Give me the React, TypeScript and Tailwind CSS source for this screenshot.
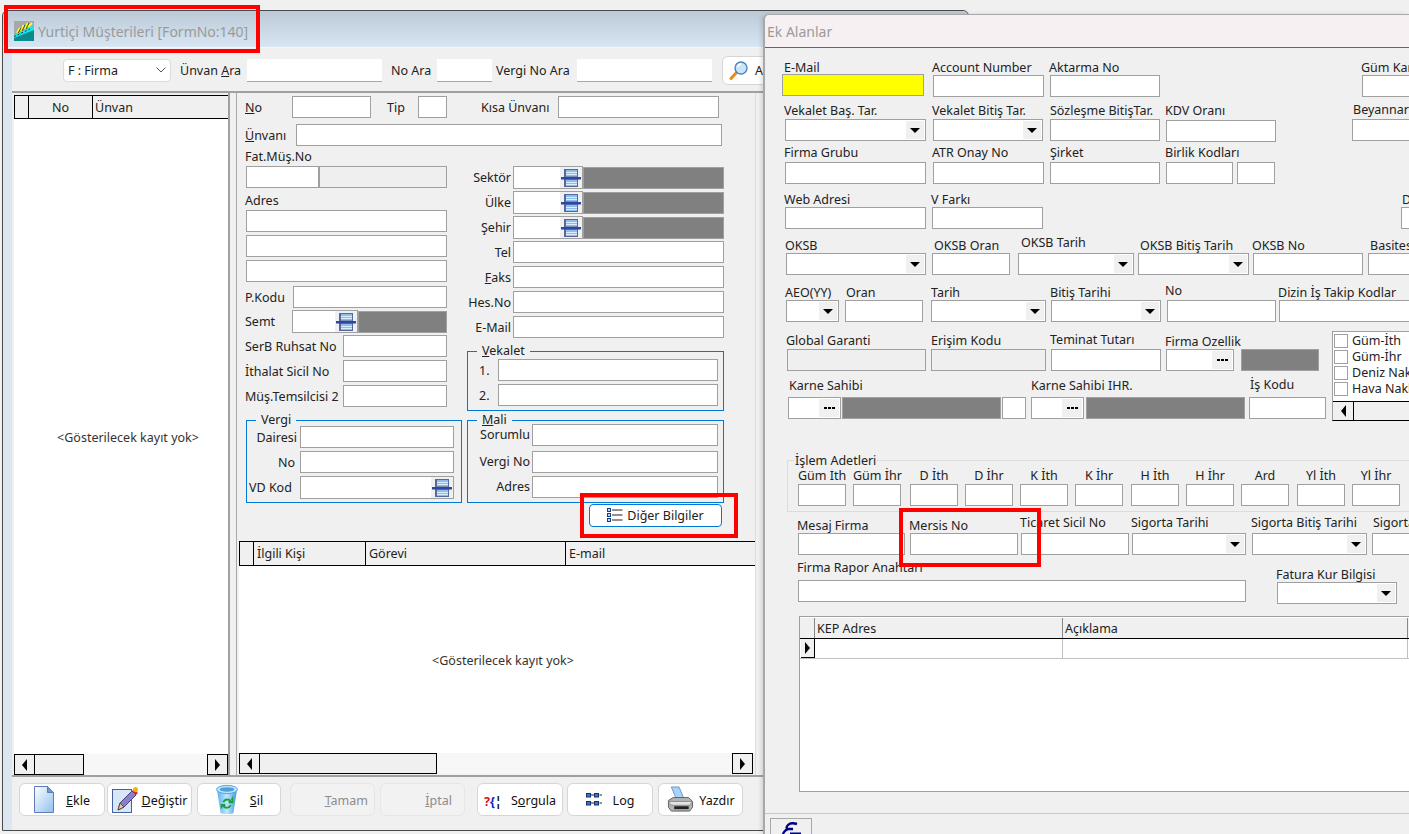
import React from 'react'

const Box = ({ className = '' }: { className?: string }) => (
  <div className={`h-[22px] shrink-0 border border-[#a0a0a0] bg-white ${className}`} />
)
const Gray = ({ className = '' }: { className?: string }) => (
  <div className={`h-[22px] shrink-0 border border-[#a0a0a0] bg-[#efefef] ${className}`} />
)
const Dark = ({ className = '' }: { className?: string }) => (
  <div className={`h-[22px] shrink-0 border border-[#a0a0a0] bg-[#808080] ${className}`} />
)

const Select = ({ className = '' }: { className?: string }) => (
  <div className={`flex h-[22px] shrink-0 justify-end border border-[#a0a0a0] bg-white p-px ${className}`}>
    <div className="flex w-[18px] items-center justify-center bg-[#f0f0f0]">
      <div className="h-0 w-0 border-x-[5px] border-t-[5px] border-x-transparent border-t-black" />
    </div>
  </div>
)

const Ellipsis = ({ className = '' }: { className?: string }) => (
  <div className={`flex h-[22px] shrink-0 justify-end border border-[#a0a0a0] bg-white p-px ${className}`}>
    <div className="flex w-[20px] items-center justify-center gap-px bg-[#f0f0f0]">
      <div className="h-[2px] w-[3px] bg-black" />
      <div className="h-[2px] w-[3px] bg-black" />
      <div className="h-[2px] w-[3px] bg-black" />
    </div>
  </div>
)

function LookupIcon() {
  return (
    <svg width="20" height="20" viewBox="0 0 20 20">
      <rect x="3" y="1" width="14" height="18" fill="#56689f" />
      <rect x="5" y="2" width="11" height="16" fill="#8fbcec" />
      <path d="M5 4.500h11M5 6.500h11M5 14.500h11M5 16.500h11" stroke="#dcedfc" />
      <rect x="5" y="8" width="11" height="4" fill="#7a8cb8" />
      <rect x="0" y="9" width="20" height="2.500" fill="#2a48a0" />
    </svg>
  )
}

const Lookup = ({ className = '' }: { className?: string }) => (
  <div className={`flex h-[23px] shrink-0 justify-end border border-[#a0a0a0] bg-white ${className}`}>
    <div className="flex w-[22px] items-center justify-center bg-[#f0f0f0]">
      <LookupIcon />
    </div>
  </div>
)

function Cell({ label, className = '', labelClass = '', children }: { label: string; className?: string; labelClass?: string; children: React.ReactNode }) {
  return (
    <div className={`flex shrink-0 flex-col ${className}`}>
      <div className={`h-4 whitespace-nowrap leading-[18px] ${labelClass}`}>{label}</div>
      {children}
    </div>
  )
}

function Legend({ className = '', children }: { className?: string; children: React.ReactNode }) {
  return <div className={`absolute h-4 bg-[#f0f0f0] px-[5px] leading-4 ${className}`}>{children}</div>
}

function ScrollBtn({ dir }: { dir: 'l' | 'r' }) {
  return (
    <div className="flex h-full w-[21px] shrink-0 items-center justify-center border border-black bg-[#f0f0f0]">
      {dir === 'l' ? (
        <div className="h-0 w-0 border-y-[6px] border-r-[5px] border-y-transparent border-r-black" />
      ) : (
        <div className="h-0 w-0 border-y-[6px] border-l-[5px] border-y-transparent border-l-black" />
      )}
    </div>
  )
}

function AppIcon() {
  return (
    <svg width="20" height="20" viewBox="0 0 20 20" className="shrink-0">
      <rect width="20" height="20" fill="#a8a8a8" />
      <path d="M0 14 20 4v6L0 20z" fill="#14e6f0" />
      <path d="M0 17 20 9v11H0z" fill="#0a8a8c" />
      <path d="M0 15.500 16 8" stroke="#0a3a3c" strokeDasharray="2 2" />
      <path d="M3 12 6 7M7 10l3-6M11 8l3-6M14 6l4-4" stroke="#ffff20" strokeWidth="2.200" />
      <path d="M4 12 7 7M8 10l3-6M12 8l3-6" stroke="#111" strokeWidth=".8" />
    </svg>
  )
}

function Magnifier() {
  return (
    <svg width="20" height="20" viewBox="0 0 20 20">
      <path d="M2 18.500 8 12" stroke="#e88a1c" strokeWidth="3" strokeLinecap="round" />
      <circle cx="12" cy="8" r="6" fill="#c8e6fa" stroke="#4f86b8" strokeWidth="1.400" />
      <path d="M9 7a3.500 3.500 0 0 1 3-3" stroke="#fff" strokeWidth="1.400" fill="none" />
    </svg>
  )
}

function ListIcon() {
  return (
    <svg width="16" height="15" viewBox="0 0 16 15">
      <g fill="#bcd6f0" stroke="#12408f">
        <rect x=".5" y=".5" width="3" height="3" />
        <rect x=".5" y="5.500" width="3" height="3" />
        <rect x=".5" y="10.500" width="3" height="3" />
      </g>
      <path d="M5 2h10.500M5 7h10.500M5 12h10.500" stroke="#222" />
    </svg>
  )
}

function DocIcon() {
  return (
    <svg width="20" height="27" viewBox="0 0 20 27">
      <defs>
        <linearGradient id="doc" x1="0" y1="0" x2="1" y2="1">
          <stop offset="0" stopColor="#ffffff" />
          <stop offset="1" stopColor="#8fc0ee" />
        </linearGradient>
      </defs>
      <path d="M.5.5h13l6 6v20H.5z" fill="url(#doc)" stroke="#5f7cb5" />
      <path d="M13.500.5v6h6z" fill="#6e9ad8" stroke="#5f7cb5" />
    </svg>
  )
}

function EditIcon() {
  return (
    <svg width="27" height="27" viewBox="0 0 27 27">
      <rect x=".5" y="3.500" width="19" height="23" fill="#d7e7f8" stroke="#45609f" />
      <path d="M6 24 8 17 20 5l4 4-12 12z" fill="#8a80c8" stroke="#4b3f86" />
      <path d="M6 24l2-7 4 4z" fill="#e8c89a" stroke="#5a4a30" />
      <path d="m20 5 2-2 4 4-2 2z" fill="#e02c1c" />
      <circle cx="23.500" cy="3.500" r="2.500" fill="#e6b818" />
    </svg>
  )
}

function BinIcon() {
  return (
    <svg width="24" height="31" viewBox="0 0 24 34">
      <defs>
        <linearGradient id="bin" x1="0" y1="0" x2="1" y2="0">
          <stop offset="0" stopColor="#58b0ee" />
          <stop offset=".5" stopColor="#bfe8ff" />
          <stop offset="1" stopColor="#3f96da" />
        </linearGradient>
      </defs>
      <path d="M1 6 5 32q7 2 14 0L23 6z" fill="url(#bin)" />
      <ellipse cx="12" cy="6" rx="11.500" ry="4.500" fill="#bce6fb" stroke="#4b9ede" />
      <ellipse cx="12" cy="6" rx="8" ry="2.500" fill="#4f9fdc" />
      <path d="M8 20a4.500 4.500 0 0 1 8-1l-2 1h4v-4l-1 1.500M16 23a4.500 4.500 0 0 1-8 1l2-1H6v4" fill="none" stroke="#1da03a" strokeWidth="2" />
    </svg>
  )
}

function LogIcon() {
  return (
    <svg width="18" height="15" viewBox="0 0 18 15">
      <g fill="#3f78c0" stroke="#14306e">
        <rect x=".5" y="1.500" width="4" height="3.500" />
        <rect x="8.500" y="1.500" width="4" height="3.500" />
        <rect x=".5" y="9.500" width="4" height="3.500" />
        <rect x="8.500" y="9.500" width="4" height="3.500" />
      </g>
      <path d="M5 3h3M13.500 3H16M5 11h3M13.500 11H16" stroke="#222" />
    </svg>
  )
}

function PrinterIcon() {
  return (
    <svg width="28" height="27" viewBox="0 0 28 28">
      <path d="M5 1h8l5 12H10z" fill="#a9d2f8" stroke="#6f94c4" />
      <path d="M2 15 7 12h16l4 4v6l-3 4H5l-3-4z" fill="#b4b4b4" stroke="#5e5e5e" />
      <path d="M2 16h25l-3 4H5z" fill="#e4e4e4" stroke="#8a8a8a" />
      <path d="M8 21h15v3H8z" fill="#222" />
    </svg>
  )
}

function ToolBtn({ className = '', disabled = false, children }: { className?: string; disabled?: boolean; children: React.ReactNode }) {
  return (
    <div className={`flex h-[33px] shrink-0 items-center rounded-md border ${disabled ? 'border-[#e6e6e6] bg-[#f2f2f2] text-[#8d8d8d]' : 'border-[#d6d6d6] bg-white text-[#111]'} ${className}`}>
      {children}
    </div>
  )
}

function MainWindow() {
  const row = 'flex items-center'
  return (
    <div className="absolute left-[2px] top-[10px] flex h-[821px] w-[967px] flex-col rounded-t-md border border-[#4a4a4a] bg-[#dbe6f1]">
      <div className="flex h-[37px] shrink-0 items-center gap-[4px] rounded-t-md border-b border-[#f5f8fb] bg-gradient-to-b from-[#bccad8] to-[#d8e5f2] pl-[11px] pt-[4px] text-[14px] text-[#9a9a9a]">
        <AppIcon />
        <span>Yurtiçi Müşterileri [FormNo:140]</span>
      </div>
      <div className="ml-[9px] flex flex-1 flex-col bg-[#f0f0f0] text-[#222]">
        <div className="flex h-[45px] shrink-0 items-center border-b-2 border-[#a0a0a0] pt-px [&_span]:pt-[2px]">
          <div className="ml-[51px] flex h-[23px] w-[108px] items-center justify-between rounded-sm border border-[#dcdcdc] bg-white px-[4px]">
            <span>F : Firma</span>
            <svg width="10" height="6" viewBox="0 0 10 6"><path d="m.5.5 4.500 4.500L9.500.5" fill="none" stroke="#555" /></svg>
          </div>
          <span className="ml-[9px] w-[67px] whitespace-nowrap">Ünvan <u>A</u>ra</span>
          <div className="h-[23px] w-[135px] border-b border-[#a8a8a8] bg-white" />
          <span className="ml-[9px] w-[46px] whitespace-nowrap">No Ara</span>
          <div className="h-[23px] w-[55px] border-b border-[#a8a8a8] bg-white" />
          <span className="ml-[4px] w-[81px] whitespace-nowrap">Vergi No Ara</span>
          <div className="h-[23px] w-[135px] border-b border-[#a8a8a8] bg-white" />
          <div className="ml-[10px] flex h-[29px] w-[80px] items-center gap-[6px] rounded-md border border-[#d6d6d6] bg-white pl-[6px]">
            <Magnifier />
            <span>Ara</span>
          </div>
        </div>
        <div className="flex h-[684px] shrink-0 border-b-2 border-[#a0a0a0]">
          <div className="flex w-[218px] shrink-0 flex-col border-r-2 border-[#a0a0a0] pl-[2px] pt-[2px]">
            <div className="flex h-[24px] shrink-0 border-y border-l border-black">
              <div className="w-[14px] border-r border-black" />
              <div className="w-[64px] border-r border-black text-center leading-[24px]">No</div>
              <div className="flex-1 pl-[2px] leading-[24px]">Ünvan</div>
            </div>
            <div className="flex flex-1 items-center justify-center bg-white pl-[14px] pt-[4px] text-[#333]">&lt;Gösterilecek kayıt yok&gt;</div>
            <div className="flex h-[21px] shrink-0 bg-[#f7f7f7]">
              <ScrollBtn dir="l" />
              <div className="w-[49px] border-y border-r border-black bg-[#f0f0f0]" />
              <div className="flex-1" />
              <ScrollBtn dir="r" />
            </div>
          </div>
          <div className="ml-[6px] flex w-[520px] shrink-0 flex-col border-x border-x-[#a8a8a8] border-r-[#dcdcdc] pb-px">
            <div className="pl-[8px] [&_span]:pt-[2px]">
              <div className={`${row} mt-[3px]`}>
                <span className="w-[47px]"><u>N</u>o</span>
                <Box className="w-[79px]" />
                <span className="ml-[16px] w-[31px]">Tip</span>
                <Box className="w-[29px]" />
                <span className="ml-[34px] w-[77px] whitespace-nowrap">Kısa Ünvanı</span>
                <Box className="w-[161px]" />
              </div>
              <div className={`${row} mt-[6px]`}>
                <span className="w-[51px]"><u>Ü</u>nvanı</span>
                <Box className="w-[426px]" />
              </div>
              <div className="flex">
                <div className="flex w-[222px] shrink-0 flex-col">
                  <div className="mt-[2px] h-4 leading-[18px]">Fat.Müş.No</div>
                  <div className="ml-px mt-[2px] flex">
                    <Box className="w-[73px]" />
                    <Gray className="w-[128px]" />
                  </div>
                  <div className="mt-[4px] h-4 leading-[18px]">Adres</div>
                  <Box className="ml-px mt-[2px] w-[201px]" />
                  <Box className="ml-px mt-[3px] w-[201px]" />
                  <Box className="ml-px mt-[3px] w-[201px]" />
                  <div className={`${row} mt-[4px]`}>
                    <span className="w-[48px]">P.Kodu</span>
                    <Box className="w-[154px]" />
                  </div>
                  <div className={`${row} mt-[2px]`}>
                    <span className="w-[47px]">Semt</span>
                    <Lookup className="w-[66px]" />
                    <Dark className="w-[89px]" />
                  </div>
                  <div className={`${row} mt-[2px]`}>
                    <span className="w-[98px] whitespace-nowrap">SerB Ruhsat No</span>
                    <Box className="w-[104px]" />
                  </div>
                  <div className={`${row} mt-[3px]`}>
                    <span className="w-[98px] whitespace-nowrap">İthalat Sicil No</span>
                    <Box className="w-[104px]" />
                  </div>
                  <div className={`${row} mt-[3px]`}>
                    <span className="w-[98px] whitespace-nowrap">Müş.Temsilcisi 2</span>
                    <Box className="w-[104px]" />
                  </div>
                  <div className="relative ml-px mt-[13px] flex h-[83px] w-[216px] flex-col gap-[3px] border border-[#0078d4] pt-[5px]">
                    <Legend className="-top-[9px] left-[9px]">Vergi</Legend>
                    <div className={row}><span className="w-[50px] text-right">Dairesi</span><Box className="ml-[3px] w-[154px]" /></div>
                    <div className={row}><span className="w-[48px] text-right">No</span><Box className="ml-[5px] w-[154px]" /></div>
                    <div className={row}><span className="w-[48px] whitespace-nowrap pl-[2px]">VD Kod</span><Lookup className="ml-[5px] w-[154px]" /></div>
                  </div>
                </div>
                <div className="flex w-[258px] shrink-0 flex-col">
                  <div className={`${row} mt-[20px]`}><span className="w-[44px] text-right">Sektör</span><Lookup className="ml-[2px] w-[70px]" /><Dark className="w-[141px]" /></div>
                  <div className={`${row} mt-[2px]`}><span className="w-[44px] text-right">Ülke</span><Lookup className="ml-[2px] w-[70px]" /><Dark className="w-[141px]" /></div>
                  <div className={`${row} mt-[2px]`}><span className="w-[44px] text-right">Şehir</span><Lookup className="ml-[2px] w-[70px]" /><Dark className="w-[141px]" /></div>
                  <div className={`${row} mt-[2px]`}><span className="w-[44px] text-right">Tel</span><Box className="ml-[2px] w-[211px]" /></div>
                  <div className={`${row} mt-[3px]`}><span className="w-[44px] text-right"><u>F</u>aks</span><Box className="ml-[2px] w-[211px]" /></div>
                  <div className={`${row} mt-[3px]`}><span className="w-[44px] whitespace-nowrap text-right">Hes.No</span><Box className="ml-[2px] w-[211px]" /></div>
                  <div className={`${row} mt-[3px]`}><span className="w-[44px] whitespace-nowrap text-right">E-Mail</span><Box className="ml-[2px] w-[211px]" /></div>
                  <div className="relative mt-[13px] flex h-[60px] w-[257px] flex-col gap-[3px] border border-[#0078d4] pl-[11px] pt-[7px]">
                    <Legend className="-top-[9px] left-[9px]"><u>V</u>ekalet</Legend>
                    <div className={row}><span className="w-[19px]">1.</span><Box className="w-[220px]" /></div>
                    <div className={row}><span className="w-[19px]">2.</span><Box className="w-[220px]" /></div>
                  </div>
                  <div className="relative mt-[9px] flex h-[83px] w-[257px] flex-col border border-[#0078d4] pt-[3px] [&_span]:-mt-[2px]">
                    <Legend className="-top-[9px] left-[9px]"><u>M</u>ali</Legend>
                    <div className={row}><span className="w-[62px] text-right">Sorumlu</span><Box className="ml-[2px] w-[186px]" /></div>
                    <div className={`${row} mt-[5px]`}><span className="w-[62px] whitespace-nowrap text-right">Vergi No</span><Box className="ml-[2px] w-[186px]" /></div>
                    <div className={`${row} mt-[3px]`}><span className="w-[62px] text-right">Adres</span><Box className="ml-[2px] w-[186px]" /></div>
                  </div>
                  <div className="ml-[122px] mt-[1px] flex h-[23px] w-[133px] items-center justify-center gap-[4px] rounded-[4px] border border-[#0078d4] bg-white">
                    <ListIcon />
                    <span>Diğer Bilgiler</span>
                  </div>
                </div>
              </div>
            </div>
            <div className="ml-[2px] mt-[14px] flex w-[516px] flex-1 flex-col">
              <div className="flex h-[25px] shrink-0 border-y border-l border-black bg-[#f0f0f0] leading-[23px]">
                <div className="w-[14px] shrink-0 border-r border-black" />
                <div className="w-[112px] shrink-0 border-r border-black pl-[3px]">İlgili Kişi</div>
                <div className="w-[200px] shrink-0 border-r border-black pl-[3px]">Görevi</div>
                <div className="flex-1 pl-[3px]">E-mail</div>
              </div>
              <div className="flex flex-1 items-center justify-center bg-white pl-[12px] pt-[4px] text-[#333]">&lt;Gösterilecek kayıt yok&gt;</div>
              <div className="mr-[2px] flex h-[21px] shrink-0 bg-[#f7f7f7]">
                <ScrollBtn dir="l" />
                <div className="w-[177px] border-y border-r border-black bg-[#f0f0f0]" />
                <div className="flex-1" />
                <ScrollBtn dir="r" />
              </div>
            </div>
          </div>
        </div>
        <div className="flex pl-[7px] pt-[6px] [&_span]:pt-[3px]">
          <ToolBtn className="w-[86px] justify-center gap-[12px]"><DocIcon /><span><u>E</u>kle</span></ToolBtn>
          <ToolBtn className="ml-[2px] w-[85px] justify-center gap-[3px]"><EditIcon /><span><u>D</u>eğiştir</span></ToolBtn>
          <ToolBtn className="ml-[5px] w-[84px] justify-center gap-[11px]"><BinIcon /><span><u>S</u>il</span></ToolBtn>
          <ToolBtn disabled className="ml-[9px] w-[85px] justify-end pr-[6px]"><span><u>T</u>amam</span></ToolBtn>
          <ToolBtn disabled className="ml-[5px] w-[85px] justify-end pr-[12px]"><span><u>İ</u>ptal</span></ToolBtn>
          <ToolBtn className="ml-[12px] w-[86px] justify-center gap-[7px]">
            <span className="flex w-[20px] font-bold leading-none"><span className="text-[#e01010]">?</span><span className="text-[#1020c0]">{'{'}</span><span className="font-bold text-black">¦</span></span>
            <span>S<u>o</u>rgula</span>
          </ToolBtn>
          <ToolBtn className="ml-[4px] w-[86px] justify-center gap-[9px]"><LogIcon /><span>Log</span></ToolBtn>
          <ToolBtn className="ml-[5px] w-[85px] justify-center gap-[5px]"><PrinterIcon /><span>Yazdır</span></ToolBtn>
        </div>
      </div>
    </div>
  )
}

function Checklist() {
  const items = ['Güm-İth', 'Güm-İhr', 'Deniz Nakliye', 'Hava Nakliye']
  return (
    <div className="ml-[6px] mt-px flex h-[90px] w-[90px] shrink-0 flex-col border border-[#a0a0a0] border-b-black bg-white">
      <div className="flex flex-col pl-px pt-px">
        {items.map((t) => (
          <div key={t} className="flex h-[16px] items-center gap-[4px] whitespace-nowrap">
            <div className="h-[14px] w-[14px] shrink-0 border border-[#a0a0a0] bg-white" />
            <span>{t}</span>
          </div>
        ))}
      </div>
      <div className="mt-[4px] flex h-[20px] border-t border-black bg-[#f0f0f0]">
        <div className="flex w-[21px] items-center justify-center border-r border-black">
          <div className="h-0 w-0 border-y-[6px] border-r-[5px] border-y-transparent border-r-black" />
        </div>
      </div>
    </div>
  )
}

function EkWindow() {
  const r = 'flex items-end'
  return (
    <div className="absolute left-[763px] top-[14px] flex h-[820px] w-[646px] flex-col overflow-hidden rounded-tl-md border-l-2 border-t border-[#a8a8a8] bg-[#f0f0f0] text-[#222] shadow-[-2px_0_4px_rgba(0,0,0,0.12)]">
      <div className="flex h-[33px] shrink-0 items-center border-b border-[#666] bg-[#f7f0f2] pl-[2px] text-[14px] text-[#9a9a9a]">Ek Alanlar</div>

      <div className={`${r} mt-[11px]`}>
        <Cell label="E-Mail" className="mb-px ml-[17px] w-[142px]" labelClass="ml-[2px] -mb-px"><div className="h-[22px] border border-[#a0a0a0] bg-[#ffff00]" /></Cell>
        <Cell label="Account Number" className="ml-[9px] w-[111px]" labelClass="-ml-px"><Box /></Cell>
        <Cell label="Aktarma No" className="ml-[6px] w-[110px]" labelClass="-ml-px"><Box /></Cell>
        <Cell label="Güm Kar" className="ml-[202px] w-[60px]" labelClass="-ml-px"><Box /></Cell>
      </div>

      <div className={`${r} mt-[5px]`}>
        <Cell label="Vekalet Baş. Tar." className="ml-[20px] w-[141px]" labelClass="-ml-px mb-px"><Select /></Cell>
        <Cell label="Vekalet Bitiş Tar." className="ml-[7px] w-[110px]" labelClass="-ml-px mb-px"><Select /></Cell>
        <Cell label="Sözleşme BitişTar." className="ml-[7px] w-[110px]" labelClass="mb-px"><Box /></Cell>
        <Cell label="KDV Oranı" className="-mb-px ml-[6px] w-[110px]" labelClass="-ml-px mb-[2px]"><Box /></Cell>
        <Cell label="Beyannar" className="ml-[76px] w-[70px]" labelClass="ml-px mb-px -translate-y-px"><Box /></Cell>
      </div>

      <div className={`${r} mt-[3px]`}>
        <Cell label="Firma Grubu" className="ml-[20px] w-[141px]" labelClass="-ml-px mb-[2px]"><Box /></Cell>
        <Cell label="ATR Onay No" className="ml-[7px] w-[111px]" labelClass="-ml-px mb-[2px]"><Box /></Cell>
        <Cell label="Şirket" className="ml-[6px] w-[110px]" labelClass="mb-[2px]"><Box /></Cell>
        <Cell label="Birlik Kodları" className="ml-[6px] w-[67px]" labelClass="-ml-px mb-[2px]"><Box /></Cell>
        <Box className="ml-[4px] w-[38px]" />
      </div>

      <div className={`${r} mt-[7px]`}>
        <Cell label="Web Adresi" className="ml-[20px] w-[141px]" labelClass="-ml-px"><Box /></Cell>
        <Cell label="V Farkı" className="ml-[6px] w-[111px]" labelClass="-ml-px"><Box /></Cell>
        <Cell label="Diğer" className="ml-[358px] w-[60px]" labelClass="ml-px"><Box /></Cell>
      </div>

      <div className={`${r} mt-[8px]`}>
        <Cell label="OKSB" className="ml-[21px] w-[140px]" labelClass="-ml-px"><Select /></Cell>
        <Cell label="OKSB Oran" className="ml-[6px] w-[78px]" labelClass="ml-[2px]"><Box /></Cell>
        <Cell label="OKSB Tarih" className="ml-[8px] w-[116px]" labelClass="ml-[3px] -translate-y-[3px]"><Select /></Cell>
        <Cell label="OKSB Bitiş Tarih" className="ml-[4px] w-[111px]" labelClass="ml-[2px]"><Select /></Cell>
        <Cell label="OKSB No" className="ml-[4px] w-[110px]" labelClass="-ml-px"><Box /></Cell>
        <Cell label="Basites" className="ml-[5px] w-[60px]" labelClass="ml-[2px]"><Box /></Cell>
      </div>

      <div className={`${r} mt-[9px]`}>
        <Cell label="AEO(YY)" className="ml-[21px] w-[53px]" labelClass="-ml-px"><Select /></Cell>
        <Cell label="Oran" className="ml-[6px] w-[78px]" labelClass="ml-px"><Box /></Cell>
        <Cell label="Tarih" className="ml-[8px] w-[115px]"><Select /></Cell>
        <Cell label="Bitiş Tarihi" className="ml-[5px] w-[110px]" labelClass="-ml-px"><Select /></Cell>
        <Cell label="No" className="ml-[6px] w-[109px]" labelClass="-ml-[2px] -translate-y-[2px]"><Box /></Cell>
        <Cell label="Dizin İş Takip Kodlar" className="ml-[3px] w-[140px]" labelClass="-ml-px"><Box /></Cell>
      </div>

      <div className="mt-[8px] flex items-start">
        <div className="flex w-[561px] shrink-0 flex-col">
          <div className={`${r} mt-[2px]`}>
            <Cell label="Global Garanti" className="ml-[22px] w-[139px]" labelClass="-ml-px mb-px"><Gray /></Cell>
            <Cell label="Erişim Kodu" className="ml-[5px] w-[115px]" labelClass="mb-px"><Gray /></Cell>
            <Cell label="Teminat Tutarı" className="ml-[5px] w-[110px]" labelClass="-ml-px mb-px -translate-y-px"><Box /></Cell>
            <Cell label="Firma Ozellik" className="ml-[5px] w-[68px]" labelClass="-ml-px mb-px translate-y-px"><Ellipsis /></Cell>
            <Dark className="ml-[7px] w-[78px]" />
          </div>
          <div className={`${r} mt-[6px]`}>
            <Cell label="Karne Sahibi" className="ml-[23px] w-[53px]" labelClass="ml-px mb-[4px]"><Ellipsis /></Cell>
            <Dark className="ml-px w-[159px]" />
            <Box className="ml-px w-[24px]" />
            <Cell label="Karne Sahibi IHR." className="ml-[5px] w-[53px]" labelClass="mb-[4px]"><Ellipsis /></Cell>
            <Dark className="ml-[2px] w-[159px]" />
            <Cell label="İş Kodu" className="ml-[4px] w-[77px]" labelClass="ml-px mb-[4px] -translate-y-px"><Box /></Cell>
          </div>
        </div>
        <Checklist />
      </div>

      <div className="relative ml-[22px] mt-[39px] flex h-[52px] w-[640px] shrink-0 items-end border border-[#dcdcdc] pb-[5px]">
        <Legend className="-top-[8px] left-[6px] !px-px">İşlem Adetleri</Legend>
        <Cell label="Güm İth" className="ml-[10px] w-[48px]" labelClass="mb-px text-center"><Box /></Cell>
        <Cell label="Güm İhr" className="ml-[7px] w-[48px]" labelClass="mb-px text-center"><Box /></Cell>
        <Cell label="D İth" className="ml-[9px] w-[48px]" labelClass="mb-px text-center"><Box /></Cell>
        <Cell label="D İhr" className="ml-[7px] w-[48px]" labelClass="mb-px text-center"><Box /></Cell>
        <Cell label="K İth" className="ml-[7px] w-[48px]" labelClass="mb-px text-center"><Box /></Cell>
        <Cell label="K İhr" className="ml-[7px] w-[48px]" labelClass="mb-px text-center"><Box /></Cell>
        <Cell label="H İth" className="ml-[8px] w-[48px]" labelClass="mb-px text-center"><Box /></Cell>
        <Cell label="H İhr" className="ml-[7px] w-[48px]" labelClass="mb-px text-center"><Box /></Cell>
        <Cell label="Ard" className="ml-[7px] w-[48px]" labelClass="mb-px text-center"><Box /></Cell>
        <Cell label="Yl İth" className="ml-[8px] w-[48px]" labelClass="mb-px text-center"><Box /></Cell>
        <Cell label="Yl İhr" className="ml-[7px] w-[48px]" labelClass="mb-px text-center"><Box /></Cell>
      </div>

      <div className={`${r} mt-[5px]`}>
        <Cell label="Mesaj Firma" className="ml-[33px] w-[107px]" labelClass="-ml-px"><Box /></Cell>
        <Cell label="Mersis No" className="ml-[5px] w-[108px]" labelClass="-ml-px"><Box /></Cell>
        <Cell label="Ticaret Sicil No" className="ml-[3px] w-[108px]" labelClass="-ml-px -translate-y-[3px]"><Box /></Cell>
        <Cell label="Sigorta Tarihi" className="ml-[3px] w-[114px]" labelClass="-ml-px -translate-y-[3px]"><Select /></Cell>
        <Cell label="Sigorta Bitiş Tarihi" className="ml-[6px] w-[115px]" labelClass="-ml-px -translate-y-[3px]"><Select /></Cell>
        <Cell label="Sigorta" className="ml-[5px] w-[60px]" labelClass="ml-px -translate-y-[3px]"><Box /></Cell>
      </div>

      <div className="mt-[4px] flex items-start">
        <Cell label="Firma Rapor Anahtarı" className="ml-[33px] w-[448px]" labelClass="-ml-px mb-[5px]"><Box /></Cell>
        <Cell label="Fatura Kur Bilgisi" className="ml-[31px] mt-[7px] w-[120px]" labelClass="-ml-px"><Select /></Cell>
      </div>

      <div className="ml-[34px] mt-[12px] h-[176px] w-[620px] shrink-0 border border-[#a0a0a0] bg-white pt-px">
        <div className="flex h-[21px] border-b border-black bg-[#f0f0f0] leading-[22px]">
          <div className="ml-px w-[14px] border-r border-[#888]" />
          <div className="w-[248px] border-r border-[#888] pl-[2px]">KEP Adres</div>
          <div className="w-[345px] border-r border-[#888] pl-[2px]">Açıklama</div>
        </div>
        <div className="flex h-[20px] border-b border-[#c0c0c0]">
          <div className="ml-px flex w-[14px] items-center justify-center border-b border-r border-black bg-[#f0f0f0]">
            <div className="h-0 w-0 border-y-[6px] border-l-[5px] border-y-transparent border-l-black" />
          </div>
          <div className="w-[248px] border-r border-[#c0c0c0]" />
          <div className="w-[345px] border-r border-[#c0c0c0]" />
        </div>
      </div>

      <div className="mt-[21px] shrink-0 border-t border-[#c8c8c8]" />
      <div className="ml-[5px] mt-[4px] flex h-[30px] w-[42px] shrink-0 justify-center border border-[#a8a8a8] pt-[3px]">
        <svg width="24" height="24" viewBox="0 0 24 24">
          <path d="M18 2c-3-1-7-1-9 1S7 7 10 7h4M9 7c-3 1-5 4-5 6s3 3 6 2" fill="none" stroke="#000080" strokeWidth="2.400" />
          <path d="M11 12h11" stroke="#000080" strokeWidth="3" />
        </svg>
      </div>
    </div>
  )
}

export default function App() {
  return (
    <div className="relative h-[834px] w-[1409px] overflow-hidden bg-[#f0f0f0] font-['Noto_Sans',sans-serif] text-[12.5px]">
      <MainWindow />
      <EkWindow />
      <div className="absolute left-[4px] top-[5px] h-[48px] w-[256px] border-4 border-[#ff0000]" />
      <div className="absolute left-[580px] top-[493px] h-[45px] w-[158px] border-4 border-[#ff0000]" />
      <div className="absolute left-[899px] top-[508px] h-[59px] w-[142px] border-4 border-[#ff0000]" />
    </div>
  )
}
